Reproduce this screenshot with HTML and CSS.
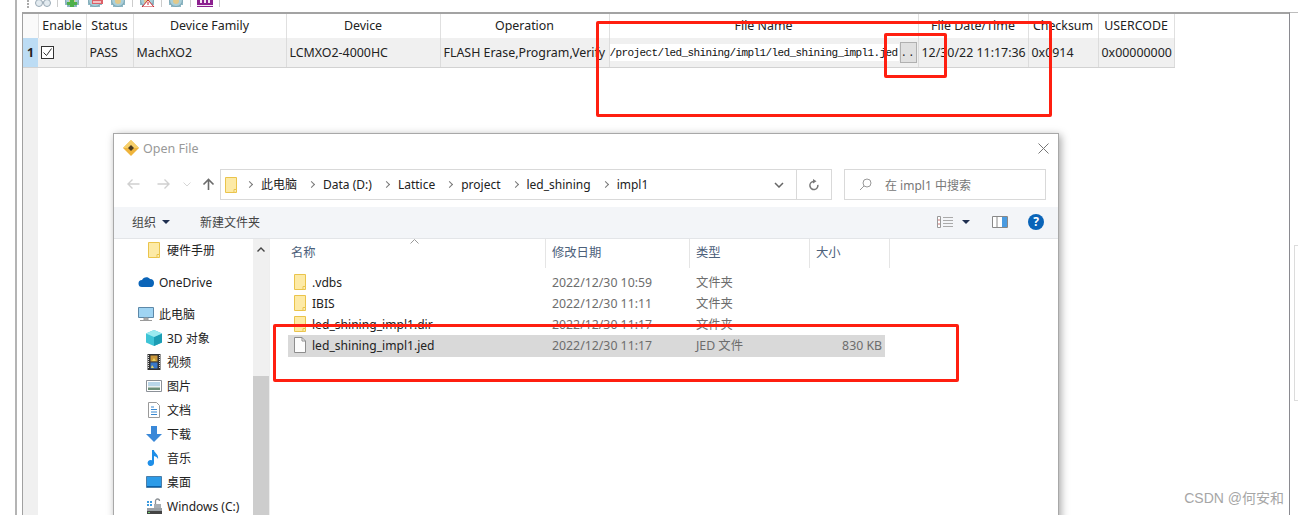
FILE: index.html
```html
<!DOCTYPE html>
<html>
<head>
    <title>Programmer - Open File</title>
    <link rel="stylesheet" href="styles.css">
</head>
<body>
    <svg class="sprites" width="0" height="0">
        <symbol id="folder" viewBox="0 0 12 16">
            <path d="M.5.5h11v15H.5z" fill="#fdeaa6" stroke="#eac44c"/>
            <path d="M9 15.500v-3h2.500" fill="#fff3c4" stroke="#eac44c"/>
        </symbol>
        <symbol id="gear" viewBox="0 0 16 16">
            <path d="M3 8h10v8H3zM1 10h14v4H1z" fill="#8fb9c6"/>
            <circle cx="8" cy="9" r="6.500" fill="#a9cfd9" stroke="#7fa6b3"/>
            <circle cx="8" cy="10" r="3" fill="#e2c98a"/>
        </symbol>
    </svg>

    <div class="page">
        <div class="shell">
            <!-- toolbar, mostly cut off at the top of the shot -->
            <div class="toolbar">
                <span class="grip"></span>
                <svg class="tool" viewBox="0 0 16 16"><circle cx="4" cy="12" r="3.500" fill="#e3ebf0" stroke="#9aa9b5"/><circle cx="12" cy="12" r="3.500" fill="#e3ebf0" stroke="#9aa9b5"/><path d="M7 11h2" stroke="#9aa9b5"/></svg>
                <span class="tool-sep"></span>
                <svg class="tool" viewBox="0 0 16 16"><use href="#gear"/><path d="M6 9h4v2h3v3h-3v2H6v-2H3v-3h3z" fill="#4eb04a"/></svg>
                <svg class="tool" viewBox="0 0 16 16"><use href="#gear"/><path d="M5 9h11v4H5z" fill="#dc6068"/><path d="M6 10h8v2H6z" fill="#f3c2c4"/></svg>
                <svg class="tool" viewBox="0 0 16 16"><use href="#gear"/></svg>
                <span class="tool-sep"></span>
                <svg class="tool" viewBox="0 0 16 16"><use href="#gear"/><path d="M9 9l6 7H3z" fill="#fff" stroke="#c8242c"/><path d="M9 11v3" stroke="#c8242c"/></svg>
                <span class="tool-sep"></span>
                <svg class="tool" viewBox="0 0 16 16"><use href="#gear"/></svg>
                <span class="tool-sep"></span>
                <svg class="tool" viewBox="0 0 16 16"><path d="M0 9h16v7H0z" fill="#8c1f8f"/><path d="M3 9h2v3H3zM7 9h2v3H7zM11 9h2v3h-2zM0 14h16v1H0z" fill="#f4e6f4"/></svg>
                <span class="tool-sep"></span>
            </div>

            <div class="grid-pane">
                <table class="device-table">
                    <thead>
                        <tr>
                            <th class="col-num"></th>
                            <th class="col-enable">Enable</th>
                            <th class="col-status">Status</th>
                            <th class="col-family">Device Family</th>
                            <th class="col-device">Device</th>
                            <th class="col-op">Operation</th>
                            <th class="col-file">File Name</th>
                            <th class="col-date">File Date/Time</th>
                            <th class="col-sum">Checksum</th>
                            <th class="col-code">USERCODE</th>
                        </tr>
                    </thead>
                    <tbody>
                        <tr>
                            <td class="row-num">1</td>
                            <td><span class="checkbox"><svg viewBox="0 0 11 11"><path d="M1.500 5.500l3 3 5-7" fill="none" stroke="#333"/></svg></span></td>
                            <td>PASS</td>
                            <td>MachXO2</td>
                            <td>LCMXO2-4000HC</td>
                            <td>FLASH Erase,Program,Verify</td>
                            <td class="file-cell">
                                <div class="file-edit">
                                    <span class="file-path">/project/led_shining/impl1/led_shining_impl1.jed</span>
                                    <span class="browse-btn">..</span>
                                </div>
                            </td>
                            <td>12/30/22 11:17:36</td>
                            <td>0x0914</td>
                            <td>0x00000000</td>
                        </tr>
                    </tbody>
                </table>
            </div>
        </div>

        <div class="top-rule"></div>
        <div class="side-stub"></div>

        <!-- Open File dialog -->
        <div class="dialog">
            <div class="titlebar">
                <svg class="app-icon" viewBox="0 0 16 16">
                    <path d="M8 0l8 8-8 8-8-8z" fill="#efb43c"/>
                    <path d="M8 0l8 8H0z" fill="#f6cf6a"/>
                    <path d="M8 5l3 3-3 3-3-3z" fill="#4a3a20"/>
                </svg>
                <span class="title-text">Open File</span>
                <svg class="close-x" viewBox="0 0 11 11"><path d="M.5.500l10 10M10.500.5l-10 10" stroke="#777" fill="none"/></svg>
            </div>

            <div class="navbar">
                <div class="nav-arrows">
                    <svg viewBox="0 0 13 12" class="arrow"><path d="M12.500 6H1M5.500 1.500L1 6l4.500 4.500" stroke="#d0d0d0" stroke-width="1.400" fill="none"/></svg>
                    <svg viewBox="0 0 13 12" class="arrow"><path d="M.5 6H12M7.500 1.500L12 6l-4.500 4.500" stroke="#d0d0d0" stroke-width="1.400" fill="none"/></svg>
                    <svg viewBox="0 0 8 5" class="arrow-small"><path d="M.5.500L4 4 7.500.5" stroke="#d6d6d6" fill="none"/></svg>
                    <svg viewBox="0 0 13 12" class="arrow"><path d="M6.500 12V1.500M1.500 6.500l5-5 5 5" stroke="#6b6b6b" stroke-width="1.600" fill="none"/></svg>
                </div>
                <div class="address">
                    <svg class="addr-folder"><use href="#folder"/></svg>
                    <span class="crumb-sep"></span><span class="crumb">此电脑</span>
                    <span class="crumb-sep"></span><span class="crumb">Data (D:)</span>
                    <span class="crumb-sep"></span><span class="crumb">Lattice</span>
                    <span class="crumb-sep"></span><span class="crumb">project</span>
                    <span class="crumb-sep"></span><span class="crumb">led_shining</span>
                    <span class="crumb-sep"></span><span class="crumb">impl1</span>
                    <svg class="addr-drop" viewBox="0 0 10 6"><path d="M1 1l4 4 4-4" stroke="#666" stroke-width="1.500" fill="none"/></svg>
                    <span class="addr-refresh">
                        <svg viewBox="0 0 12 12"><path d="M6.500 2.200a4 4 0 1 1-4 4" transform="rotate(80 6 6)" stroke="#777" stroke-width="1.500" fill="none"/><path d="M5 0l3.500 2.200L5 4.400z" fill="#777"/></svg>
                    </span>
                </div>
                <div class="search">
                    <svg viewBox="0 0 13 13" class="search-icon"><circle cx="8" cy="5" r="4" fill="none" stroke="#999"/><path d="M5 8L1 12" stroke="#999"/></svg>
                    <span>在 impl1 中搜索</span>
                </div>
            </div>

            <div class="cmdbar">
                <span class="cmd">组织<i class="caret"></i></span>
                <span class="cmd">新建文件夹</span>
                <span class="cmd-right">
                    <svg class="views" viewBox="0 0 16 12"><path d="M.5.500h3v11h-3z" fill="#fff" stroke="#999"/><path d="M1 4h2M1 8h2" stroke="#c77"/><path d="M6 1.500h10M6 4.500h10M6 7.500h10M6 10.500h10" stroke="#aaa"/></svg>
                    <i class="caret"></i>
                    <svg class="pane-btn" viewBox="0 0 16 12"><path d="M.5.500h15v11H.5z" fill="#fff" stroke="#888"/><path d="M10 1h5v10h-5z" fill="#4a9be0"/><path d="M5 1v10" stroke="#888"/></svg>
                    <span class="help">?</span>
                </span>
            </div>

            <div class="dlg-body">
                <div class="tree">
                    <div class="tree-list">
                        <div class="tree-row lvl3 first"><svg class="ti-folder"><use href="#folder"/></svg>硬件手册</div>
                        <div class="tree-row lvl1 gap-top">
                            <svg class="ti" viewBox="0 0 16 16"><path d="M4 13a3.500 3.500 0 0 1 0-7c1-3 6-4 8-1 3 0 4 2 4 4s-1 4-3 4z" fill="#0a64b8"/></svg>OneDrive
                        </div>
                        <div class="tree-row lvl1 gap-top">
                            <svg class="ti" viewBox="0 0 16 16"><path d="M.5 1.500h15v10H.5z" fill="#9fd4f3" stroke="#5d88a8"/><path d="M6 12h4v2H6zM2 14.500h12" stroke="#9a9a9a" fill="#bbb"/></svg>此电脑
                        </div>
                        <div class="tree-row lvl2">
                            <svg class="ti" viewBox="0 0 16 16"><path d="M8 0l8 3.500v9L8 16l-8-3.500v-9z" fill="#3ec4d6"/><path d="M8 7v9l8-3.500v-9z" fill="#1c9db4"/><path d="M8 0l8 3.500L8 7 0 3.500z" fill="#9beaf0"/></svg>3D 对象
                        </div>
                        <div class="tree-row lvl2">
                            <svg class="ti" viewBox="0 0 16 16"><path d="M1.500 0h13v16h-13z" fill="#333"/><path d="M2.500 1v14M13.500 1v14" stroke="#ddd" stroke-dasharray="1 1"/><path d="M4.500 1.500h7v6h-7z" fill="#c9963a"/><path d="M4.500 8.500h7v6h-7z" fill="#3a78c8"/><path d="M6 11l2 3h-3zM8 4l2 3H6z" fill="#e8d25a"/></svg>视频
                        </div>
                        <div class="tree-row lvl2">
                            <svg class="ti" viewBox="0 0 16 16"><path d="M.5 2.500h15v11H.5z" fill="#fff" stroke="#8c9198"/><path d="M2 4h12v4H2z" fill="#b9d6e8"/><path d="M2 8h12v1.500H2z" fill="#e8eef0"/><path d="M2 9.500h12V12H2z" fill="#6d8f78"/></svg>图片
                        </div>
                        <div class="tree-row lvl2">
                            <svg class="ti" viewBox="0 0 16 16"><path d="M2.500.500h8l3 3v12h-11z" fill="#fff" stroke="#9a9a9a"/><path d="M5 5h3M5 7.500h6M5 10h6M5 12.500h6" stroke="#3a88d0"/></svg>文档
                        </div>
                        <div class="tree-row lvl2">
                            <svg class="ti" viewBox="0 0 16 16"><path d="M5 0h6v8h5l-8 8-8-8h5z" fill="#3a88d8"/></svg>下载
                        </div>
                        <div class="tree-row lvl2">
                            <svg class="ti" viewBox="0 0 16 16"><path d="M6 0h2c0 3 5 4 4 9-1-2-2-2.500-4-3v7a3.200 3 0 1 1-2-2.800z" fill="#1f8fe8"/></svg>音乐
                        </div>
                        <div class="tree-row lvl2">
                            <svg class="ti" viewBox="0 0 16 16"><path d="M.5 2.500h15v11H.5z" fill="#2c9be8" stroke="#4a7ea8"/><path d="M1 12h14v1H1z" fill="#0a5fa8"/></svg>桌面
                        </div>
                        <div class="tree-row lvl2">
                            <svg class="ti" viewBox="0 0 16 16"><path d="M1 10h15v3H1z" fill="#9aa0a5"/><path d="M1 13h15v3H1z" fill="#444"/><path d="M2 14h2v1H2z" fill="#6fd06f"/><path d="M1 3h2v2H1zM4 3h2v2H4zM1 6h2v2H1zM4 6h2v2H4z" fill="#3a9be0"/><path d="M8 6h7v4H8z" fill="#a8aeb3"/><path d="M9.500 6V3a2 2 0 0 1 4 0" fill="none" stroke="#8a8f94" stroke-width="1.300"/></svg>Windows (C:)
                        </div>
                    </div>
                    <div class="scrollbar">
                        <svg class="scroll-up" viewBox="0 0 8 5"><path d="M.5 4.500L4 1l3.500 3.500" stroke="#444" stroke-width="1.400" fill="none"/></svg>
                        <div class="scroll-thumb"></div>
                    </div>
                </div>

                <div class="files">
                    <svg class="sort-caret" viewBox="0 0 9 5"><path d="M.5 4.500L4.500.5l4 4" stroke="#999" fill="none"/></svg>
                    <div class="file-head">
                        <span>名称</span>
                        <span>修改日期</span>
                        <span>类型</span>
                        <span>大小</span>
                    </div>
                    <div class="file-row">
                        <span class="fname"><svg class="fi"><use href="#folder"/></svg>.vdbs</span>
                        <span>2022/12/30 10:59</span>
                        <span>文件夹</span>
                        <span></span>
                    </div>
                    <div class="file-row">
                        <span class="fname"><svg class="fi"><use href="#folder"/></svg>IBIS</span>
                        <span>2022/12/30 11:11</span>
                        <span>文件夹</span>
                        <span></span>
                    </div>
                    <div class="file-row">
                        <span class="fname"><svg class="fi"><use href="#folder"/></svg>led_shining_impl1.dir</span>
                        <span>2022/12/30 11:17</span>
                        <span>文件夹</span>
                        <span></span>
                    </div>
                    <div class="file-row selected">
                        <span class="fname">
                            <svg class="fi" viewBox="0 0 12 16"><path d="M.5.500h7.500l3.500 3.500v11.500H.5z" fill="#fcfcfc" stroke="#8d8d8d"/><path d="M8 .5V4h3.500" fill="none" stroke="#8d8d8d"/></svg>led_shining_impl1.jed
                        </span>
                        <span>2022/12/30 11:17</span>
                        <span>JED 文件</span>
                        <span class="fsize">830 KB</span>
                    </div>
                </div>
            </div>
        </div>

        <!-- red markup drawn over the shot -->
        <div class="mark mark-file"></div>
        <div class="mark mark-btn"></div>
        <div class="mark mark-row"></div>

        <div class="watermark">CSDN @何安和</div>
    </div>
</body>
</html>
```

FILE: styles.css
```css
* {
    box-sizing: border-box;
}
body {
    margin: 0;
    background: white;
    font-family: "Noto Sans", "Noto Sans CJK SC", sans-serif;
    font-size: 12px;
    color: #222;
}
.sprites {
    display: block;
    height: 0;
}
.page {
    position: relative;
    height: 515px;
    overflow: hidden;
}

/* main window */
.shell {
    margin-left: 15px;
    width: 1275px;
    height: 515px;
    border-left: 2px solid #b4b4b4;
    padding-left: 5px;
    display: flex;
    flex-direction: column;
}
.toolbar {
    height: 12px;
    display: flex;
    align-items: flex-start;
    gap: 6px;
    overflow: hidden;
    padding-left: 5px;
}
.grip {
    width: 2px;
    height: 8px;
    border-left: 2px dotted #aaa;
}
.tool {
    width: 16px;
    height: 16px;
    margin-top: -9px;
    flex: none;
}
.tool + .tool {
    margin-left: 1px;
}
.tool-sep {
    width: 1px;
    height: 7px;
    background: #ccc;
}
.grid-pane {
    flex: 1;
    border-top: 2px solid #a3a3a3;
    border-left: 1px solid #a0a0a0;
    border-right: 1px solid #8a8a90;
    background: linear-gradient(to right, #f0f0f0 15px, white 15px);
}
.top-rule {
    position: absolute;
    left: 1290px;
    top: 12px;
    width: 8px;
    height: 1px;
    background: #bdbdbd;
}
.device-table {
    border-collapse: collapse;
    table-layout: fixed;
    width: 1151px;
    background: white;
    font-size: 12.400px;
}
.device-table th {
    height: 24px;
    font-weight: normal;
    background: white;
    border-right: 1px solid #e0e0e0;
    padding: 0 0 2px;
    white-space: nowrap;
    overflow: hidden;
}
.device-table td {
    height: 29px;
    background: #f0f0f0;
    border-right: 1px solid #dcdcdc;
    border-bottom: 1px solid #d2d2d2;
    padding: 0 3px;
    white-space: nowrap;
    overflow: hidden;
}
.device-table .col-num {
    background: #fafafa;
}
.col-num { width: 15px; }
.col-enable { width: 48px; }
.col-status { width: 47px; }
.col-family { width: 153px; }
.col-device { width: 154px; }
.col-op { width: 169px; }
.col-file { width: 309px; }
.col-date { width: 110px; }
.col-sum { width: 70px; }
.col-code { width: 76px; }

.device-table .row-num {
    background: #bcdcf4;
    font-weight: bold;
    padding: 0;
    text-align: center;
    border-right: none;
}
.checkbox {
    display: block;
    width: 13px;
    height: 13px;
    border: 1px solid #333;
    background: white;
}
.checkbox svg {
    display: block;
}
.device-table .file-cell {
    padding: 0;
}
.file-edit {
    display: flex;
    align-items: center;
    gap: 1px;
}
.file-path {
    width: 289px;
    height: 17px;
    line-height: 19px;
    background: white;
    overflow: hidden;
    font-family: "Liberation Mono", monospace;
    font-size: 11px;
    letter-spacing: -0.6px;
    color: #111;
}
.browse-btn {
    width: 17px;
    height: 21px;
    line-height: 20px;
    text-align: center;
    background: #e0e0e0;
    border: 1px solid #b0b0b0;
    font-family: "Liberation Mono", monospace;
    font-size: 11px;
    letter-spacing: 1px;
}

/* right-hand stub at the very edge */
.side-stub {
    position: absolute;
    left: 1294px;
    top: 245px;
    width: 10px;
    height: 156px;
    border: 1px solid #dcdcdc;
}

/* dialog */
.dialog {
    position: absolute;
    left: 113px;
    top: 133px;
    width: 946px;
    height: 400px;
    background: white;
    border: 1px solid #a8a8a8;
    box-shadow: 2px 2px 8px rgba(0,0,0,0.35);
    display: flex;
    flex-direction: column;
}
.titlebar {
    height: 28px;
    display: flex;
    align-items: center;
    padding: 0 9px;
    flex: none;
}
.app-icon {
    width: 16px;
    height: 16px;
    margin-right: 4px;
}
.title-text {
    flex: 1;
    color: #999;
    font-size: 12.500px;
}
.close-x {
    width: 11px;
    height: 11px;
}
.navbar {
    height: 45px;
    display: flex;
    align-items: flex-start;
    padding-top: 7px;
    flex: none;
}
.nav-arrows {
    width: 106px;
    height: 30px;
    display: flex;
    align-items: center;
    padding-left: 13px;
}
.arrow {
    width: 13px;
    height: 12px;
    margin-right: 17px;
    flex: none;
}
.arrow-small {
    width: 8px;
    height: 5px;
    margin-right: 11px;
    margin-left: -4px;
    flex: none;
}
.address {
    width: 612px;
    height: 31px;
    border: 1px solid #d9d9d9;
    display: flex;
    align-items: center;
    padding-left: 4px;
    color: #222;
}
.addr-folder {
    width: 12px;
    height: 16px;
    margin-right: 7px;
    flex: none;
}
.crumb-sep {
    width: 5px;
    height: 5px;
    border-top: 1.500px solid #777;
    border-right: 1.500px solid #777;
    transform: rotate(45deg);
    margin: 0 9px 0 3px;
    flex: none;
}
.crumb {
    margin-right: 9px;
    padding-bottom: 1px;
}
.addr-drop {
    width: 10px;
    height: 6px;
    margin-left: auto;
    margin-right: 12px;
}
.addr-refresh {
    width: 35px;
    height: 29px;
    border-left: 1px solid #d9d9d9;
    display: flex;
    align-items: center;
    justify-content: center;
}
.addr-refresh svg {
    width: 12px;
    height: 12px;
}
.search {
    width: 202px;
    height: 31px;
    margin-left: 12px;
    border: 1px solid #d9d9d9;
    display: flex;
    align-items: center;
    padding-left: 14px;
    color: #777;
}
.search-icon {
    width: 13px;
    height: 13px;
    margin-right: 13px;
}
.cmdbar {
    height: 32px;
    background: #f3f5f8;
    border-bottom: 1px solid #e3e5e8;
    display: flex;
    align-items: center;
    padding: 0 0 2px 18px;
    gap: 30px;
    color: #444;
    flex: none;
}
.cmd {
    display: flex;
    align-items: center;
}
.caret {
    width: 0;
    height: 0;
    border-left: 4px solid transparent;
    border-right: 4px solid transparent;
    border-top: 4px solid #1f2f50;
    margin-left: 6px;
}
.cmd-right {
    margin-left: auto;
    display: flex;
    align-items: center;
    padding-right: 14px;
}
.views {
    width: 16px;
    height: 12px;
}
.cmd-right .caret {
    margin-left: 9px;
    margin-right: 22px;
}
.pane-btn {
    width: 16px;
    height: 12px;
    margin-right: 20px;
}
.help {
    width: 16px;
    height: 16px;
    border-radius: 50%;
    background: #0a64b8;
    color: white;
    font-weight: bold;
    font-size: 12px;
    line-height: 16px;
    text-align: center;
}
.dlg-body {
    flex: 1;
    display: flex;
    min-height: 0;
}

/* navigation tree */
.tree {
    width: 156px;
    display: flex;
    flex: none;
    border-right: 1px solid #eee;
}
.tree-list {
    flex: 1;
    overflow: hidden;
}
.tree-row {
    height: 24px;
    display: flex;
    align-items: center;
    white-space: nowrap;
    color: #222;
}
.first {
    margin-top: -1px;
}
.gap-top {
    margin-top: 8px;
}
.lvl1 { padding-left: 24px; }
.lvl2 { padding-left: 32px; }
.lvl3 { padding-left: 34px; }
.ti {
    width: 16px;
    height: 16px;
    margin-right: 5px;
    flex: none;
}
.ti-folder {
    width: 12px;
    height: 16px;
    margin-right: 7px;
    flex: none;
}
.scrollbar {
    width: 16px;
    background: #f0f0f0;
    flex: none;
    display: flex;
    flex-direction: column;
}
.scroll-up {
    width: 8px;
    height: 5px;
    margin: 8px auto 0;
}
.scroll-thumb {
    margin-top: 124px;
    flex: 1;
    background: #cdcdcd;
}

/* file list */
.files {
    flex: 1;
    position: relative;
    padding-left: 18px;
    font-size: 12.300px;
}
.sort-caret {
    position: absolute;
    left: 140px;
    top: 0;
    width: 9px;
    height: 5px;
}
.file-head {
    display: grid;
    grid-template-columns: 258px 144px 120px 80px;
    height: 29px;
    margin-bottom: 4px;
    color: #4c607a;
}
.file-head span {
    border-right: 1px solid #e5e5e5;
    padding: 4px 6px 0;
}
.file-head span:first-child {
    padding-left: 3px;
}
.file-row {
    display: grid;
    grid-template-columns: 258px 144px 120px 75px;
    height: 22px;
    width: 597px;
    margin-bottom: -1px;
    padding-bottom: 2px;
    align-items: center;
    color: #6d6d6d;
}
.file-row span {
    padding: 0 6px;
    white-space: nowrap;
}
.file-row .fname {
    display: flex;
    align-items: center;
    color: #222;
    font-size: 12.100px;
}
.fi {
    width: 12px;
    height: 16px;
    margin-right: 6px;
    flex: none;
}
.selected {
    background: #d9d9d9;
}
.file-row .fsize {
    text-align: right;
    padding-right: 3px;
}

/* red annotation boxes */
.mark {
    position: absolute;
    border: 3px solid #ff1f10;
    border-radius: 2px;
}
.mark-file {
    left: 596px;
    top: 21px;
    width: 456px;
    height: 96px;
}
.mark-btn {
    left: 884px;
    top: 33px;
    width: 63px;
    height: 45px;
}
.mark-row {
    left: 273px;
    top: 324px;
    width: 686px;
    height: 58px;
}
.watermark {
    position: absolute;
    right: 14px;
    bottom: 8px;
    font-family: "Liberation Sans", "Noto Sans CJK SC", sans-serif;
    font-size: 14px;
    color: #a6a6a6;
}
```
